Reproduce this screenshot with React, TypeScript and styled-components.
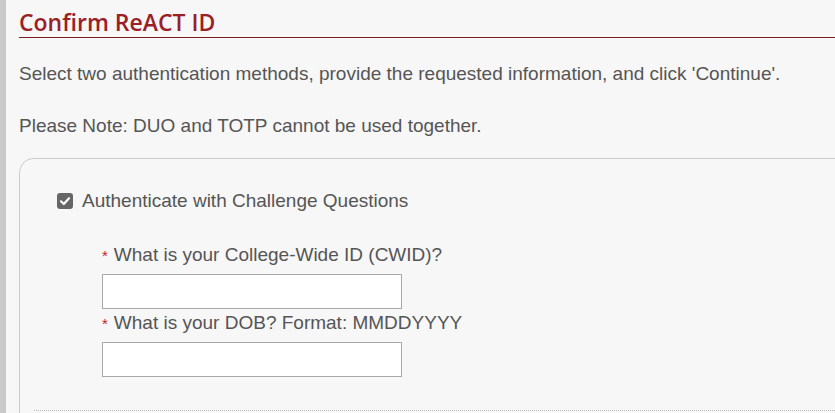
import React from "react";
import styled, { createGlobalStyle } from "styled-components";

const GlobalStyle = createGlobalStyle`
  html, body {
    margin: 0;
    padding: 0;
    background: #f7f7f7;
    overflow: hidden;
  }
  body {
    font-family: "Liberation Sans", Arial, sans-serif;
    color: #555555;
  }
`;

const Page = styled.div`
  height: 413px;
  overflow: hidden;
  border-left: 6px solid #c9c9c9;
  padding-left: 13px;
  box-sizing: border-box;
`;

const Heading = styled.h2`
  margin: 0;
  padding-top: 8px;
  height: 29px;
  font-family: "Open Sans", sans-serif;
  font-weight: 600;
  font-size: 23px;
  line-height: 28px;
  color: #9b2026;
  border-bottom: 1px solid #7a1c20;
  white-space: nowrap;
`;

const Intro = styled.p<{ $top: number }>`
  margin: 0;
  font-size: 19px;
  line-height: 20px;
  white-space: nowrap;
  padding-top: ${(p) => p.$top}px;
`;

const Card = styled.div`
  margin-top: 22px;
  border: 1px solid #cccccc;
  border-right: none;
  border-bottom: none;
  border-top-left-radius: 15px;
  padding-top: 32px;
  height: 300px;
`;

const CheckRow = styled.label`
  display: flex;
  align-items: center;
  gap: 9px;
  padding-left: 37px;
  font-size: 19px;
  line-height: 20px;
`;

const Box = styled.span`
  width: 16px;
  height: 16px;
  border-radius: 3px;
  background: #666666;
  display: flex;
  align-items: center;
  justify-content: center;
`;

const Questions = styled.div`
  padding-left: 82px;
  padding-top: 34px;
  display: flex;
  flex-direction: column;
`;

const Label = styled.div`
  font-size: 19px;
  line-height: 20px;
  white-space: nowrap;
`;

const Star = styled.span`
  color: #c8202a;
  font-size: 15px;
  margin-right: 6px;
`;

const Input = styled.input`
  box-sizing: border-box;
  width: 300px;
  height: 35px;
  margin: 8px 0 4px;
  border: 1px solid #a9a9a9;
  background: #ffffff;
  outline: none;
`;

const Divider = styled.div`
  margin: 29px 0 0 14px;
  border-top: 1px dotted #bbbbbb;
`;

export default function App() {
  return (
    <>
      <GlobalStyle />
      <Page>
        <Heading>Confirm ReACT ID</Heading>
        <Intro $top={26}>
          Select two authentication methods, provide the requested information, and click 'Continue'.
        </Intro>
        <Intro $top={32}>Please Note: DUO and TOTP cannot be used together.</Intro>
        <Card>
          <CheckRow>
            <Box>
              <svg width="12" height="12" viewBox="0 0 12 12">
                <path d="M2 6.3 L4.8 9 L10 3.2" fill="none" stroke="#ffffff" strokeWidth="2.2" strokeLinecap="round" strokeLinejoin="round" />
              </svg>
            </Box>
            Authenticate with Challenge Questions
          </CheckRow>
          <Questions>
            <Label>
              <Star>*</Star>What is your College-Wide ID (CWID)?
            </Label>
            <Input type="text" />
            <Label>
              <Star>*</Star>What is your DOB? Format: MMDDYYYY
            </Label>
            <Input type="text" />
          </Questions>
          <Divider />
        </Card>
      </Page>
    </>
  );
}
